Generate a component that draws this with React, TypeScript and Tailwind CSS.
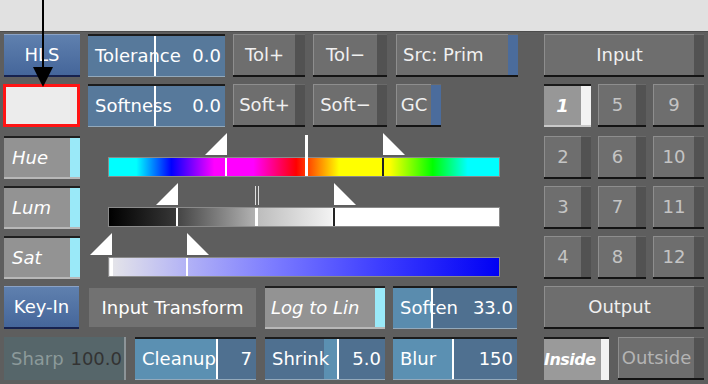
import React from "react"

function BlueBtn({ className, label }: { className: string; label: string }) {
  return (
    <div
      className={`flex items-center justify-center text-white bg-[linear-gradient(#5f80ae,#45669a)] border-t border-[#8aa2c6] border-b-2 border-b-[#17224e] ${className}`}
    >
      {label}
    </div>
  )
}

function GrayBtn({
  className,
  label,
  strip = "bg-[#525252]",
  text = "justify-center text-[#f0f0f0]",
}: {
  className: string
  label: string
  strip?: string
  text?: string
}) {
  return (
    <div className={`flex border-b-2 border-[#141414] ${className}`}>
      <div className={`flex flex-1 items-center bg-[#6e6e6e] border-t border-l border-[#8e8e8e] ${text}`}>{label}</div>
      <div className={`w-[10px] border-t border-[#6a6a6a] ${strip}`} />
    </div>
  )
}

function LightBtn({ className, label, strip, text }: { className: string; label: string; strip: string; text: string }) {
  return (
    <div className={`flex border-t-2 border-[#202020] border-b-2 border-b-[#b8b8b8] ${className}`}>
      <div className={`flex flex-1 items-center bg-[#939393] italic text-white ${text}`}>{label}</div>
      <div className={`w-[10px] ${strip}`} />
    </div>
  )
}

function Field({
  className,
  label,
  value,
  fill,
  base = "bg-[#4f7090]",
}: {
  className: string
  label: string
  value: string
  fill: string
  base?: string
}) {
  return (
    <div className={`relative flex border-t-2 border-[#1c1c1c] border-b border-b-[#93a9bb] ${base} ${className}`}>
      <div className={`absolute inset-y-0 border-r-2 border-white ${fill}`} />
      <div className="relative flex flex-1 items-center justify-between pl-[7px] pr-[4px] text-white">
        <span>{label}</span>
        <span>{value}</span>
      </div>
    </div>
  )
}

function Tri({ left, flip }: { left: string; flip?: boolean }) {
  return (
    <svg className={`absolute bottom-[21px] ${left}`} width="22" height="22" viewBox="0 0 22 22">
      <polygon points={flip ? "0,0 22,22 0,22" : "0,22 22,0 22,22"} fill="#fff" />
    </svg>
  )
}

function NumBtn({ label }: { label: string }) {
  return <GrayBtn className="h-full" label={label} text="justify-center text-[#c4c4c4]" />
}

function Grid({ nums }: { nums: string[] }) {
  return (
    <div className="ml-auto mr-[4px] grid w-[160px] grid-cols-[47px_48px_51px] gap-x-[7px]">
      {nums.map((n) =>
        n === "1" ? (
          <div key={n} className="flex border-t-2 border-[#1a1a1a] border-b-2 border-b-[#c9c9c9]">
            <div className="flex flex-1 items-center justify-center bg-[#979797] font-bold italic text-white">1</div>
            <div className="w-[10px] bg-[#f2f2f2]" />
          </div>
        ) : (
          <NumBtn key={n} label={n} />
        ),
      )}
    </div>
  )
}

export default function App() {
  return (
    <div className="relative h-[384px] w-[708px] overflow-hidden bg-[#5e5e5e] font-['DejaVu_Sans',sans-serif] text-[18px] leading-none">
      <div className="h-[32px] border-b border-[#4c4c4c] bg-[#e1e1e1]" />

      <div className="flex flex-col pt-[2px]">
        {/* row 1 */}
        <div className="flex h-[43px]">
          <BlueBtn className="ml-[4px] w-[76px]" label="HLS" />
          <Field className="ml-[8px] w-[137px]" label="Tolerance" value="0.0" fill="left-0 w-[68px]" base="bg-[#57799b]" />
          <GrayBtn className="ml-[8px] w-[72px]" label="Tol+" />
          <GrayBtn className="ml-[8px] w-[74px]" label="Tol−" />
          <GrayBtn className="ml-[9px] w-[122px]" label="Src: Prim" strip="bg-[#4b6c9c]" text="justify-start pl-[6px] text-[#f0f0f0]" />
          <GrayBtn className="ml-auto mr-[4px] w-[160px]" label="Input" />
        </div>

        {/* row 2 */}
        <div className="mt-[7px] flex h-[43px]">
          <div className="ml-[3px] w-[77px] border-[3px] border-[#ff1414] bg-[#ececec]" />
          <Field className="ml-[8px] w-[137px]" label="Softness" value="0.0" fill="left-0 w-[68px]" base="bg-[#57799b]" />
          <GrayBtn className="ml-[8px] w-[72px]" label="Soft+" />
          <GrayBtn className="ml-[8px] w-[74px]" label="Soft−" />
          <GrayBtn className="ml-[9px] w-[45px]" label="GC" strip="bg-[#4b6c9c]" />
          <Grid nums={["1", "5", "9"]} />
        </div>

        {/* hue */}
        <div className="mt-[9px] flex h-[43px]">
          <LightBtn className="ml-[4px] w-[76px]" label="Hue" strip="bg-[#9ae9f8]" text="pl-[8px]" />
          <div className="relative ml-[28px] mt-[21px] h-[20px] w-[392px] border border-[#8a8a8a] bg-[linear-gradient(90deg,#00ffff_0%,#00ffff_7%,#0000ff_16%,#ff00ff_27%,#ff00ff_37%,#ff0000_48%,#ffff00_59%,#ffff00_72%,#00ff00_83%,#00ffff_92%,#00ffff_100%)]">
            <Tri left="left-[96px]" />
            <Tri left="left-[274px]" flip />
            <div className="absolute inset-y-0 left-[116px] w-[2px] bg-white" />
            <div className="absolute bottom-0 top-[-23px] left-[196px] w-[3px] bg-white" />
            <div className="absolute inset-y-0 left-[273px] w-[2px] bg-[#222]" />
          </div>
          <Grid nums={["2", "6", "10"]} />
        </div>

        {/* lum */}
        <div className="mt-[7px] flex h-[43px]">
          <LightBtn className="ml-[4px] w-[76px]" label="Lum" strip="bg-[#9ae9f8]" text="pl-[8px]" />
          <div className="relative ml-[28px] mt-[21px] h-[20px] w-[392px] border border-[#8a8a8a] bg-[linear-gradient(90deg,#000_0%,#363636_17%,#444_17.5%,#b2b2b2_37.5%,#bcbcbc_38%,#f2f2f2_57%,#fff_57.5%,#fff_100%)]">
            <Tri left="left-[47px]" />
            <Tri left="left-[225px]" flip />
            <div className="absolute inset-y-0 left-[67px] w-[2px] bg-white" />
            <div className="absolute inset-y-0 left-[146px] w-[3px] bg-white" />
            <div className="absolute top-[-22px] h-[19px] left-[146px] w-px bg-[#ddd]" />
            <div className="absolute top-[-22px] h-[19px] left-[149px] w-px bg-[#ddd]" />
            <div className="absolute inset-y-0 left-[224px] w-[2px] bg-[#222]" />
          </div>
          <Grid nums={["3", "7", "11"]} />
        </div>

        {/* sat */}
        <div className="mt-[7px] flex h-[43px]">
          <LightBtn className="ml-[4px] w-[76px]" label="Sat" strip="bg-[#9ae9f8]" text="pl-[8px]" />
          <div className="relative ml-[28px] mt-[21px] h-[20px] w-[392px] border border-[#8a8a8a] bg-[linear-gradient(90deg,#e6e6e8_0%,#b2b2f6_20%,#7c7cff_42%,#3c3cff_70%,#0000f4_100%)]">
            <Tri left="left-[-19px]" />
            <Tri left="left-[78px]" flip />
            <div className="absolute inset-y-0 left-[1px] w-[3px] bg-white" />
            <div className="absolute inset-y-0 left-[77px] w-[2px] bg-white" />
          </div>
          <Grid nums={["4", "8", "12"]} />
        </div>

        {/* row 6 */}
        <div className="mt-[7px] flex h-[43px]">
          <BlueBtn className="ml-[4px] w-[75px]" label="Key-In" />
          <div className="my-[2px] ml-[10px] flex w-[167px] items-center justify-center bg-[#727272] text-white">Input Transform</div>
          <LightBtn className="ml-[9px] w-[120px]" label="Log to Lin" strip="bg-[#9ae9f8]" text="pl-[6px]" />
          <Field className="ml-[8px] w-[124px]" label="Soften" value="33.0" fill="left-0 w-[40px] bg-[#5a8cae]" />
          <GrayBtn className="ml-auto mr-[4px] w-[160px]" label="Output" />
        </div>

        {/* row 7 */}
        <div className="mt-[8px] flex h-[43px]">
          <div className="ml-[4px] flex w-[122px] items-center justify-between border-r-2 border-[#8c9498] bg-[#56666a] pl-[7px] pr-[2px]">
            <span className="text-[#8c9a9a]">Sharp</span>
            <span className="text-[#333]">100.0</span>
          </div>
          <Field className="ml-[9px] w-[121px]" label="Cleanup" value="7" fill="left-0 w-[83px] bg-[#5b90b2]" />
          <Field className="ml-[9px] w-[120px]" label="Shrink" value="5.0" fill="left-[59px] w-[15px] bg-[#5b90b2]" />
          <Field className="ml-[8px] w-[124px]" label="Blur" value="150" fill="left-0 w-[61px] bg-[#5b90b2]" />
          <div className="ml-auto mr-[4px] flex w-[160px]">
            <div className="flex w-[65px] border-t-2 border-[#1a1a1a]">
              <div className="flex flex-1 items-center bg-[#9a9a9a] text-[16px] font-bold italic tracking-[-0.5px] text-white">Inside</div>
              <div className="w-[8px] bg-[#f2f2f2]" />
            </div>
            <GrayBtn className="ml-[9px] w-[86px]" label="Outside" text="justify-center text-[#b4b4b4]" />
          </div>
        </div>
      </div>

      <svg className="absolute left-0 top-0" width="60" height="90" viewBox="0 0 60 90">
        <line x1="43" y1="0" x2="43" y2="70" stroke="#000" strokeWidth="2" />
        <polygon points="33,67 53,67 43,87" fill="#000" />
      </svg>
    </div>
  )
}
